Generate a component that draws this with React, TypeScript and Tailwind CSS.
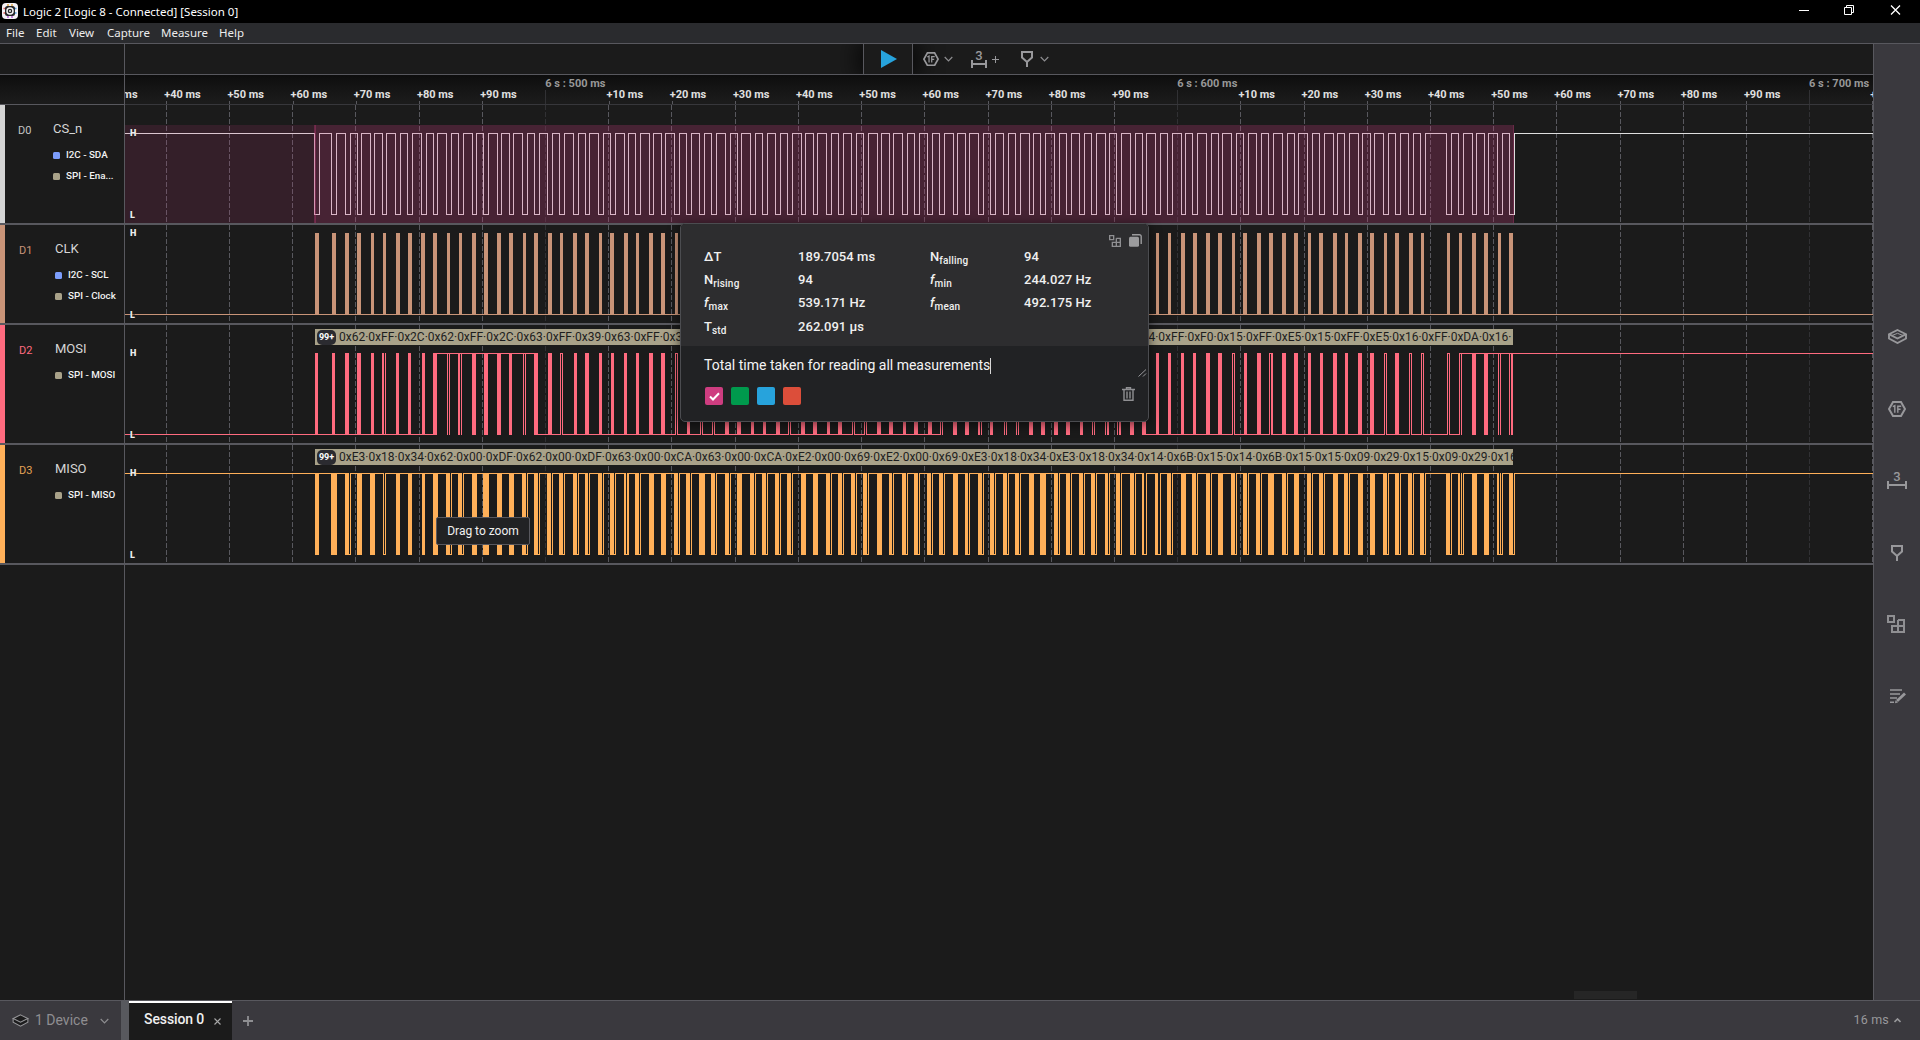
import React from "react";

const ROBOTO = "font-[Roboto,'Liberation_Sans',sans-serif]";
const SEGOE = "font-['Noto_Sans','Open_Sans',sans-serif]";

const VIEW_X = 125;
const VIEW_W = 1748;

const GRID = [
  166, 229, 292, 355, 419, 482, 545, 608, 671, 735, 798, 861, 924, 988, 1051, 1114, 1177, 1240, 1304,
  1367, 1430, 1493, 1556, 1620, 1683, 1746, 1809, 1872,
];
const MAJOR = [545, 1177, 1809];

type Burst = number[]; // [start, width, ...extra edges]

const MISO: Burst[] = [
  [315, 4], [331, 6], [345, 4, 350], [357, 5], [370, 5], [383, 1, 385], [396, 4], [408, 4], [422, 3],
  [433, 5], [446, 4, 451], [458, 4, 463], [472, 5], [483, 6], [497, 5], [509, 5], [522, 4, 527],
  [534, 4, 539], [547, 4, 552], [559, 4, 564], [573, 4, 578], [585, 3, 589], [598, 4, 603],
  [610, 4, 615], [624, 2, 627, 628], [635, 4, 640], [649, 5], [661, 5], [674, 4, 679], [686, 4, 691],
  [699, 6], [711, 4, 716], [725, 4, 730], [737, 5], [750, 4, 755], [762, 4, 767], [775, 4, 780],
  [787, 4, 792], [801, 5], [813, 5], [826, 4, 831], [838, 4, 843], [851, 4, 856], [863, 4, 868],
  [877, 5], [889, 3, 893], [902, 4, 907], [914, 4, 919], [927, 4, 932], [939, 4, 944], [953, 5],
  [965, 3, 969], [978, 4, 983], [990, 4, 995], [1003, 4, 1008], [1015, 4, 1020], [1029, 5], [1040, 6],
  [1054, 4, 1059], [1066, 4, 1071], [1079, 4, 1084], [1091, 4, 1096], [1105, 3, 1109],
  [1116, 4, 1121], [1130, 4, 1135], [1142, 2, 1146], [1155, 3, 1160], [1167, 4, 1172], [1181, 5],
  [1192, 4, 1197], [1206, 4, 1211], [1218, 5], [1231, 4, 1236], [1243, 4, 1248], [1256, 4, 1261],
  [1268, 6], [1282, 4, 1287], [1294, 5], [1307, 4, 1312], [1319, 4, 1324], [1333, 5], [1344, 4, 1349],
  [1358, 5], [1370, 5], [1383, 4, 1388], [1395, 4, 1400], [1408, 4, 1413], [1420, 4, 1425],
  [1446, 4, 1451], [1458, 2, 1461, 1463], [1472, 5], [1484, 5], [1497, 2, 1500, 1502], [1509, 4, 1514],
];

const CLK: Burst[] = [
  [315, 4], [332, 4], [345, 4], [357, 4], [371, 3], [383, 3], [396, 4], [408, 4], [421, 4], [433, 4],
  [447, 3], [459, 3], [472, 4], [484, 4], [497, 4], [509, 4], [523, 3], [534, 4], [548, 4], [560, 3],
  [573, 4], [585, 4], [599, 3], [610, 4], [624, 4], [636, 3], [649, 4], [661, 4], [675, 3],
  [1156, 3], [1168, 3], [1181, 4], [1193, 4], [1206, 4], [1218, 4], [1232, 3], [1243, 4], [1257, 4],
  [1269, 4], [1282, 4], [1294, 4], [1308, 3], [1319, 4], [1333, 4], [1345, 3], [1358, 4], [1370, 4],
  [1384, 3], [1395, 4], [1409, 4], [1421, 3], [1447, 3], [1459, 3], [1472, 4], [1484, 4], [1498, 3],
  [1509, 4],
];

const MOSI: Burst[] = [
  [315, 3], [332, 3], [345, 4], [357, 4], [371, 3], [382, 2], [385, 1], [396, 3], [408, 3], [422, 3],
  [433, 4], [447, 1], [449, 1], [458, 2], [461, 1], [472, 4], [484, 4], [497, 4], [509, 3], [523, 1],
  [525, 1], [534, 4], [548, 4], [574, 3], [585, 4], [599, 3], [611, 3], [624, 3], [636, 3], [649, 4],
  [661, 4], [687, 3], [725, 4], [737, 4], [751, 3], [763, 3], [776, 4], [801, 4], [813, 4], [827, 3],
  [838, 4], [877, 4], [889, 4], [903, 3], [914, 4], [928, 4], [940, 1], [942, 1], [953, 4], [965, 4],
  [978, 2], [981, 1], [990, 3], [1004, 1], [1006, 1], [1016, 1], [1018, 1], [1029, 4], [1041, 4],
  [1054, 4], [1066, 4], [1080, 3], [1092, 1], [1094, 1], [1105, 1], [1107, 2], [1117, 1], [1119, 2],
  [1130, 4], [1142, 4], [1156, 3], [1168, 3], [1181, 3], [1193, 3], [1206, 4], [1218, 4], [1244, 3],
  [1257, 4], [1271, 2], [1282, 4], [1294, 4], [1308, 3], [1320, 3], [1333, 4], [1345, 3], [1358, 4],
  [1370, 4], [1395, 4], [1459, 1], [1461, 1], [1472, 4], [1484, 4], [1498, 1], [1500, 1], [1509, 1],
  [1511, 2],
];
// single wide-high pulses: [first edge, last edge]
const MOSI_PULSES = [
  [560, 562], [675, 677], [700, 702], [712, 714], [788, 790], [852, 854], [864, 866], [1232, 1234],
  [1269, 1272], [1384, 1386], [1409, 1411], [1421, 1423], [1447, 1449],
];
const MOSI_HIGH = [[437, 534], [940, 1142], [1459, 1873]];

const CS_HEAD = [
  [314, 319], [331, 336], [345, 350], [357, 361], [370, 374], [382, 386], [395, 400], [407, 412],
  [421, 426],
];
const CS_LOWS = [
  ...CS_HEAD,
  ...MISO.slice(9).map((b) => [b[0], b.length > 2 ? b[b.length - 1] : b[0] + b[1] - 1]),
];

const rect = (x: number, y: number, w: number, h: number) => `M${x} ${y}h${w}v${h}h${-w}z`;

function csPath(top: number, bottom: number) {
  let d = "";
  let x = VIEW_X;
  for (const [a, b] of CS_LOWS) {
    d += rect(x, top, a + 1 - x, 1) + rect(a, top, 1, bottom - top + 1);
    d += rect(a, bottom, b - a + 1, 1) + rect(b, top, 1, bottom - top + 1);
    x = b;
  }
  return d + rect(x, top, 1873 - x, 1);
}

function misoPath(top: number, bottom: number) {
  const h = bottom - top + 1;
  let d = "";
  let x = VIEW_X;
  for (const [a, w, ...edges] of MISO) {
    d += rect(x, top, a - x, 1) + rect(a, top, w, h);
    x = a + w;
    if (edges.length) {
      edges.forEach((e) => (d += rect(e, top, 1, h)));
      const last = edges[edges.length - 1];
      d += rect(a, bottom, last - a + 1, 1);
      x = last;
    }
  }
  return d + rect(x, top, 1873 - x, 1);
}

function clkPath(top: number, bottom: number) {
  return rect(VIEW_X, bottom, VIEW_W, 1) + CLK.map(([a, w]) => rect(a, top, w, bottom - top + 1)).join("");
}

function mosiPath(top: number, bottom: number) {
  const h = bottom - top + 1;
  let d = MOSI.map(([a, w]) => rect(a, top, w, h)).join("");
  const gaps = [...MOSI_PULSES, ...MOSI_HIGH].sort((p, q) => p[0] - q[0]);
  let x = VIEW_X;
  for (const [a, b] of gaps) {
    d += rect(x, bottom, a - x, 1) + rect(a, top, b - a + 1, 1);
    x = b;
  }
  for (const [a, b] of MOSI_PULSES) {
    d += rect(a, top, 1, h) + rect(b, top, 1, h);
  }
  return d;
}

function Wave({ y, h, d, color, selection }: { y: number; h: number; d: string; color: string; selection?: boolean }) {
  return (
    <svg className="block" width={VIEW_W} height={h} viewBox={`${VIEW_X} ${y} ${VIEW_W} ${h}`} shapeRendering="crispEdges">
      {GRID.map((x) => (
        <line key={x} x1={x + 0.5} x2={x + 0.5} y1={y} y2={y + h} stroke={MAJOR.includes(x) ? "#313134" : "#58585e"} strokeDasharray="5 2" />
      ))}
      <path d={d} fill={color} />
      {selection && (
        <>
          <rect x={125} y={125} width={190} height={98} fill="#cc3d7f" fillOpacity={0.15} />
          <rect x={315} y={125} width={1198} height={98} fill="#cc3d7f" fillOpacity={0.25} />
          <rect x={314} y={125} width={2} height={98} fill="#cc3d7f" fillOpacity={0.35} />
          <rect x={1513} y={125} width={1} height={98} fill="#cc3d7f" fillOpacity={0.45} />
        </>
      )}
    </svg>
  );
}

function Hexagon({ size = 18 }: { size?: number }) {
  return (
    <svg width={size} height={(size * 16) / 18} viewBox="0 0 18 16" fill="none" stroke="#98989b" strokeWidth="2">
      <path d="M5 1h8l4 7-4 7H5L1 8z" />
      <path d="M4.800 5.600L6.800 4.600V11.800M9.800 11.800V5.200H13.200M9.800 8.300H12.600" strokeWidth="1.400" />
    </svg>
  );
}

function Ruler3({ w = 20 }: { w?: number }) {
  return (
    <div className={`flex flex-col items-center text-[13px] font-medium leading-[10px] text-[#98989b] ${ROBOTO}`}>
      <span className="h-[9px]">3</span>
      <svg width={w} height="8" viewBox={`0 0 ${w} 8`} fill="none" stroke="#98989b" strokeWidth="2">
        <path d={`M1 0v8M${w - 1} 0v8M1 4h${w - 2}`} />
      </svg>
    </div>
  );
}

function Pin() {
  return (
    <svg width="12" height="16" viewBox="0 0 12 16" fill="none" stroke="#98989b" strokeWidth="2">
      <path d="M1 1h10v5.500L6 11 1 6.500zM6 10v6" />
    </svg>
  );
}

function Chevron({ up }: { up?: boolean }) {
  return up ? (
    <svg width="7" height="5" viewBox="0 0 7 5" fill="none" stroke="#98989b" strokeWidth="1.600"><path d="M.5 4l3-3 3 3" /></svg>
  ) : (
    <svg width="9" height="6" viewBox="0 0 9 6" fill="none" stroke="#8d8d90" strokeWidth="1.200"><path d="M.7 1l3.800 3.800L8.300 1" /></svg>
  );
}

function Blocks({ size }: { size: number }) {
  return (
    <svg width={size} height={size} viewBox="0 0 18 18" fill="none" stroke="#8f8f92" strokeWidth="2">
      <path d="M1 1h6v6H1zM11 5h6v12H5v-6h12M11 5v12" />
    </svg>
  );
}

function Layers({ dark }: { dark?: boolean }) {
  return (
    <svg width={dark ? 17 : 19} height={dark ? 13 : 15} viewBox="0 0 19 15" fill={dark ? "#1c1c1d" : "none"} stroke="#98989b" strokeWidth={dark ? 1.2 : 1.9}>
      <path d="M1 5v4.500l8.500 4.500L18 9.500V5" />
      <path d="M9.500 1L18 5.200 9.500 9.500 1 5.200z" />
      {!dark && <path d="M4 6.500l5.500-2.200L15 6.500" strokeWidth="1" />}
    </svg>
  );
}

function AppIcon() {
  return (
    <svg width="16" height="16" viewBox="0 0 16 16">
      <rect width="16" height="16" rx="4" fill="#f4f1f6" />
      <path d="M6 1v3M10 1v3" stroke="#d9a13a" strokeWidth="1.400" />
      <path d="M1.500 5.500h3M1.500 10h3" stroke="#dd5a50" strokeWidth="1.400" />
      <path d="M11.500 5.500h3M11.500 10h3" stroke="#4b9ee0" strokeWidth="1.400" />
      <path d="M6 12v3M10 12v3" stroke="#b15ad6" strokeWidth="1.400" />
      <rect x="3" y="3" width="10" height="10" rx="2.500" fill="#26262a" />
      <circle cx="8" cy="8" r="3" fill="none" stroke="#f2f2f2" strokeWidth="1.500" />
      <circle cx="8" cy="8" r="1" fill="#f2f2f2" />
    </svg>
  );
}

function Level({ children, className }: { children: string; className: string }) {
  return (
    <span className={`absolute left-[5px] bg-[#1b1b1b]/40 text-[9px] font-black leading-[9px] text-[#ececec] ${className}`}>{children}</span>
  );
}

function Decoded({ children }: { children: React.ReactNode }) {
  return (
    <div className="absolute left-[190px] top-[4px] flex h-4 w-[1198px] items-center overflow-hidden whitespace-nowrap bg-[#a9a289] text-[12px] leading-4 text-[#1d1d1d]">
      <span className="ml-[2px] flex h-[15px] w-[19px] shrink-0 items-center justify-center rounded-[5px] bg-[#2b2b30] text-[9px] font-bold text-white">99+</span>
      {children}
    </div>
  );
}

function Channel({ id, name, items, bar, idColor, height, shift, children }: {
  id: string; name: string; items: [string, string][]; bar: string; idColor: string; height: string; shift?: boolean; children: React.ReactNode;
}) {
  return (
    <div className={`flex border-b-2 border-[#58585e] ${height}`}>
      <div className={`w-[5px] shrink-0 ${bar}`} />
      <div className="flex w-[120px] shrink-0 border-r border-[#58585e]">
        <div className={`pt-[18px] text-[11px] leading-4 ${idColor} ${shift ? "w-[48px] pl-[13px]" : "w-[50px] pl-[14px]"}`}>{id}</div>
        <div className="flex-1 overflow-hidden pt-[14px]">
          <div className="text-[13px] leading-5 text-[#d6d6d6]">{name}</div>
          <div className="mt-[6px]">
            {items.map(([c, t]) => (
              <div key={t} className="flex h-[21px] items-center gap-[6px] whitespace-nowrap text-[9.800px] font-medium text-[#f2f2f2]">
                <span className={`h-[7px] w-[7px] rounded-[1.500px] ${c}`} />
                {t}
              </div>
            ))}
          </div>
        </div>
      </div>
      <div className="relative">{children}</div>
    </div>
  );
}

const BLUE = "bg-[#7c9dfb]";
const TAN = "bg-[#a9a289]";

function Stat({ k, sub, v, italic }: { k: string; sub?: string; v: string; italic?: boolean }) {
  return (
    <div className="flex h-full items-center">
      <div className="w-[94px] whitespace-nowrap">
        <span className={italic ? "italic" : ""}>{k}</span>
        {sub && <span className="relative top-[3px] text-[10px] tracking-[0.200px]">{sub}</span>}
      </div>
      <div className="whitespace-nowrap">{v}</div>
    </div>
  );
}

function Popup() {
  return (
    <div className="absolute left-[680px] top-[223px] flex h-[199px] w-[469px] flex-col rounded-[5px] border border-[#4b4c50] bg-[#212224] shadow-[0_2px_12px_rgba(0,0,0,0.6)]">
      <div className="relative h-[122px] rounded-t-[4px] bg-[#2d2d2f]">
        <div className="absolute right-[6px] top-[10px] flex items-center gap-[8px]">
          <Blocks size={12} />
          <svg width="13" height="13" viewBox="0 0 13 13"><path d="M3 .8h7.500a1.700 1.700 0 0 1 1.700 1.700V10" fill="none" stroke="#9b9b9d" strokeWidth="1.400" /><rect x="0" y="2.800" width="10" height="10" rx="1.500" fill="#9b9b9d" /></svg>
        </div>
        <div className="grid h-[117px] grid-cols-[226px_1fr] grid-rows-[23px_23px_23px_25px] pl-[23px] pt-[21px] text-[13px] font-medium tracking-[0.050px] text-[#f0f0f0]">
          <Stat k="ΔT" v="189.7054 ms" />
          <Stat k="N" sub="falling" v="94" />
          <Stat k="N" sub="rising" v="94" />
          <Stat k="f" italic sub="min" v="244.027 Hz" />
          <Stat k="f" italic sub="max" v="539.171 Hz" />
          <Stat k="f" italic sub="mean" v="492.175 Hz" />
          <Stat k="T" sub="std" v="262.091 µs" />
        </div>
      </div>
      <div className="flex h-[34px] items-end pl-[23px]">
        <span className="mb-[5px] flex h-[20px] items-center whitespace-nowrap text-[14px] text-[#f4f4f4]">Total time taken for reading all measurements</span>
        <span className="mb-[6px] h-[16px] w-[1px] bg-[#d8d8d8]" />
        <svg className="mb-[3px] ml-auto mr-[1px]" width="9" height="8" viewBox="0 0 9 8" stroke="#98989b"><path d="M.5 7.500L8 .5M5 7.500L8 4.500" /></svg>
      </div>
      <div className="flex items-start gap-[8px] pl-[24px] pr-[13px] pt-[7px]">
        <span className="flex h-[18px] w-[18px] items-center justify-center rounded-[2px] bg-[#ce3d80]">
          <svg width="11" height="9" viewBox="0 0 11 9" fill="none" stroke="#fff" strokeWidth="2"><path d="M1 4.500l3 3L10 1.200" /></svg>
        </span>
        <span className="h-[18px] w-[18px] rounded-[2px] bg-[#009a4d]" />
        <span className="h-[18px] w-[18px] rounded-[2px] bg-[#27a3dc]" />
        <span className="h-[18px] w-[18px] rounded-[2px] bg-[#dc4e3a]" />
        <svg className="ml-auto" width="13" height="14" viewBox="0 0 13 14" fill="none" stroke="#8f8f92" strokeWidth="1.400"><path d="M0 2.500h13M4.500 2V.7h4V2M2 3v10.300h9V3M5 4.500v7M8 4.500v7" /></svg>
      </div>
    </div>
  );
}

const labels = ["+30 ms", "+40 ms", "+50 ms", "+60 ms", "+70 ms", "+80 ms", "+90 ms", "", "+10 ms", "+20 ms", "+30 ms", "+40 ms", "+50 ms", "+60 ms", "+70 ms", "+80 ms", "+90 ms", "", "+10 ms", "+20 ms", "+30 ms", "+40 ms", "+50 ms", "+60 ms", "+70 ms", "+80 ms", "+90 ms", "", "+10 ms"];
const majors: Record<number, string> = { 7: "6 s : 500 ms", 17: "6 s : 600 ms", 27: "6 s : 700 ms" };

export default function App() {
  return (
    <div className={`relative flex h-[1040px] w-[1920px] flex-col overflow-hidden bg-[#1b1b1b] ${ROBOTO}`}>
      <div className={`flex h-[23px] shrink-0 items-center bg-black text-white ${SEGOE}`}>
        <div className="ml-[2px] -mt-[1px]"><AppIcon /></div>
        <span className="ml-[5px] whitespace-nowrap text-[11.500px] tracking-[-0.010px]">Logic 2 [Logic 8 - Connected] [Session 0]</span>
        <svg className="-mt-[3px] ml-auto mr-[18px]" width="103" height="12" viewBox="0 0 103 12" fill="none" stroke="#fff">
          <path d="M0 6.500h10" />
          <path d="M45.500 3.500h7v7h-7zM47.500 3V1.500h7v7H53" />
          <path d="M92 1.500l9 9M101 1.500l-9 9" strokeWidth="1.300" />
        </svg>
      </div>
      <div className={`flex h-[21px] shrink-0 items-center border-b border-[#58585e] bg-[#2a2b2e] pl-[6px] text-[11.500px] text-[#ececec] ${SEGOE}`}>
        <span className="w-[30px]">File</span>
        <span className="w-[33px]">Edit</span>
        <span className="w-[38px]">View</span>
        <span className="w-[54px]">Capture</span>
        <span className="w-[58px]">Measure</span>
        <span>Help</span>
      </div>
      <div className="flex h-[956px] shrink-0">
        <div className="flex w-[1873px] flex-col overflow-hidden">
          <div className="relative flex h-[31px] shrink-0 overflow-hidden border-b border-[#58585e]">
            <div className="w-[125px] border-r border-[#58585e]" />
            <div className="ml-[738px] flex w-[50px] items-center border-x border-[#58585e] bg-[#1b1b1b] pl-[17px] shadow-[0_0_24px_4px_rgba(0,0,0,0.8)]">
              <svg width="16" height="18" viewBox="0 0 16 18"><path d="M0 0l16 9-16 9z" fill="#27a3dc" /></svg>
            </div>
            <div className="relative flex items-center">
              <div className="ml-[10px]"><Hexagon size={16} /></div>
              <div className="ml-[5px]"><Chevron /></div>
              <div className="ml-[18px]"><Ruler3 w={16} /></div>
              <svg className="ml-[5px]" width="7" height="7" viewBox="0 0 7 7" stroke="#98989b"><path d="M3.500 0v7M0 3.500h7" /></svg>
              <div className="ml-[22px]"><Pin /></div>
              <div className="ml-[7px]"><Chevron /></div>
            </div>
          </div>
          <div className="flex h-[30px] shrink-0 border-b border-[#37373b] bg-[linear-gradient(#0d0d0d,#141414_40%,#1b1b1b_90%)]">
            <div className="h-[30px] w-[125px] shrink-0 border-b border-r border-[#58585e]" />
            <div className="flex overflow-hidden">
              <div className="-ml-[24px] flex shrink-0">
                {labels.map((l, i) => (
                  <div key={i} className="relative h-[29px] w-[63.200px] shrink-0 whitespace-nowrap text-[11px] font-bold leading-[12px]">
                    {majors[i] ? (
                      <>
                        <div className="pl-[2px] pt-[3px] text-[#989898]">{majors[i]}</div>
                        <div className="ml-[2px] h-[14px] w-[1px] bg-[#313134]" />
                      </>
                    ) : (
                      <>
                        <div className="pt-[14px] text-[#e0e0e0]">{l}</div>
                        <div className="ml-[2px] h-[3px] w-[1px] bg-[#58585e]" />
                      </>
                    )}
                  </div>
                ))}
              </div>
            </div>
          </div>
          <Channel shift id="D0" name="CS_n" items={[[BLUE, "I2C - SDA"], [TAN, "SPI - Ena..."]]} bar="bg-[#d4d4d4]" idColor="text-[#c4c4c4]" height="h-[120px]">
            <Wave y={105} h={118} d={csPath(133, 214)} color="#dfdfdf" selection />
            <Level className="top-[24px]">H</Level>
            <Level className="top-[106px]">L</Level>
          </Channel>
          <Channel id="D1" name="CLK" items={[[BLUE, "I2C - SCL"], [TAN, "SPI - Clock"]]} bar="bg-[#c99478]" idColor="text-[#c99478]" height="h-[100px]">
            <Wave y={225} h={98} d={clkPath(233, 314)} color="#c99478" />
            <Level className="top-[4px]">H</Level>
            <Level className="top-[86px]">L</Level>
          </Channel>
          <Channel id="D2" name="MOSI" items={[[TAN, "SPI - MOSI"]]} bar="bg-[#ff6b7f]" idColor="text-[#ff6b7f]" height="h-[120px]">
            <Wave y={325} h={118} d={mosiPath(353, 434)} color="#ff6b7f" />
            <Decoded>
              <span className="ml-[3px] w-[790px] shrink-0 overflow-hidden">0x62·0xFF·0x2C·0x62·0xFF·0x2C·0x63·0xFF·0x39·0x63·0xFF·0x39·</span>
              <span>0x14·0xFF·0xF0·0x15·0xFF·0xE5·0x15·0xFF·0xE5·0x16·0xFF·0xDA·0x16·</span>
            </Decoded>
            <Level className="top-[24px]">H</Level>
            <Level className="top-[106px]">L</Level>
          </Channel>
          <Channel id="D3" name="MISO" items={[[TAN, "SPI - MISO"]]} bar="bg-[#ffb059]" idColor="text-[#e5a355]" height="h-[120px]">
            <Wave y={445} h={118} d={misoPath(473, 554)} color="#ffb059" />
            <Decoded>
              <span className="ml-[3px]">0xE3·0x18·0x34·0x62·0x00·0xDF·0x62·0x00·0xDF·0x63·0x00·0xCA·0x63·0x00·0xCA·0xE2·0x00·0x69·0xE2·0x00·0x69·0xE3·0x18·0x34·0xE3·0x18·0x34·0x14·0x6B·0x15·0x14·0x6B·0x15·0x15·0x09·0x29·0x15·0x09·0x29·0x16</span>
            </Decoded>
            <Level className="top-[24px]">H</Level>
            <Level className="top-[106px]">L</Level>
          </Channel>
          <div className="flex flex-1">
            <div className="w-[125px] border-r border-[#58585e]" />
            <div className="flex flex-1 items-end justify-end pb-[1px] pr-[236px]">
              <div className="h-[8px] w-[63px] bg-[#262626]" />
            </div>
          </div>
        </div>
        <div className="flex w-[47px] flex-col items-center border-l border-[#58585e] bg-[#3a393e] pt-[285px]">
          <div className="flex h-[15px] items-center"><Layers /></div>
          <div className="mt-[57px]"><Hexagon /></div>
          <div className="mt-[55px]"><Ruler3 /></div>
          <div className="mt-[56px]"><Pin /></div>
          <div className="mr-[2px] mt-[54px]"><Blocks size={18} /></div>
          <svg className="ml-[3px] mt-[56px]" width="17" height="15" viewBox="0 0 17 15" fill="none" stroke="#98989b" strokeWidth="1.600">
            <path d="M0 1h12M0 5h10M0 9h7M0 13.200h4" />
            <path d="M7 12l8-7.500" strokeWidth="2.800" />
            <path d="M5 14.300l.5-3 2.500 2.200z" fill="#98989b" stroke="none" />
          </svg>
        </div>
      </div>
      <div className="flex h-[40px] shrink-0 border-t border-[#58585e] bg-[#3a393e] text-[#98989b]">
        <div className="flex w-[121px] items-center pl-[12px]">
          <Layers dark />
          <span className="ml-[6px] w-[65px] text-[14px] text-[#8f8e91]">1 Device</span>
          <Chevron />
        </div>
        <div className="w-[8px] bg-[#58595e]" />
        <div className="flex w-[103px] items-center border-t-2 border-white bg-[#1b1b1b] pl-[15px]">
          <span className="-mt-[5px] w-[70px] whitespace-nowrap text-[14px] font-medium tracking-[-0.100px] text-[#f0f0f0]">Session 0</span>
          <svg width="7" height="7" viewBox="0 0 7 7" stroke="#a8a8a8" strokeWidth="1.100"><path d="M.5.5l6 6M6.500.5l-6 6" /></svg>
        </div>
        <svg className="ml-[11px] mt-[15px]" width="10" height="10" viewBox="0 0 10 10" stroke="#8f8f92" strokeWidth="1.800"><path d="M5 0v10M0 5h10" /></svg>
        <div className="ml-auto flex items-center gap-[5px] pr-[19px] text-[12.500px] tracking-[0.200px]">
          16 ms <Chevron up />
        </div>
      </div>
      <div className="absolute left-[436px] top-[517px] flex h-[28px] w-[94px] items-center justify-center whitespace-nowrap rounded-[2px] border border-[#58585e] bg-[#212224] pb-[1px] text-[12px] text-[#f0f0f0]">Drag to zoom</div>
      <Popup />
    </div>
  );
}
